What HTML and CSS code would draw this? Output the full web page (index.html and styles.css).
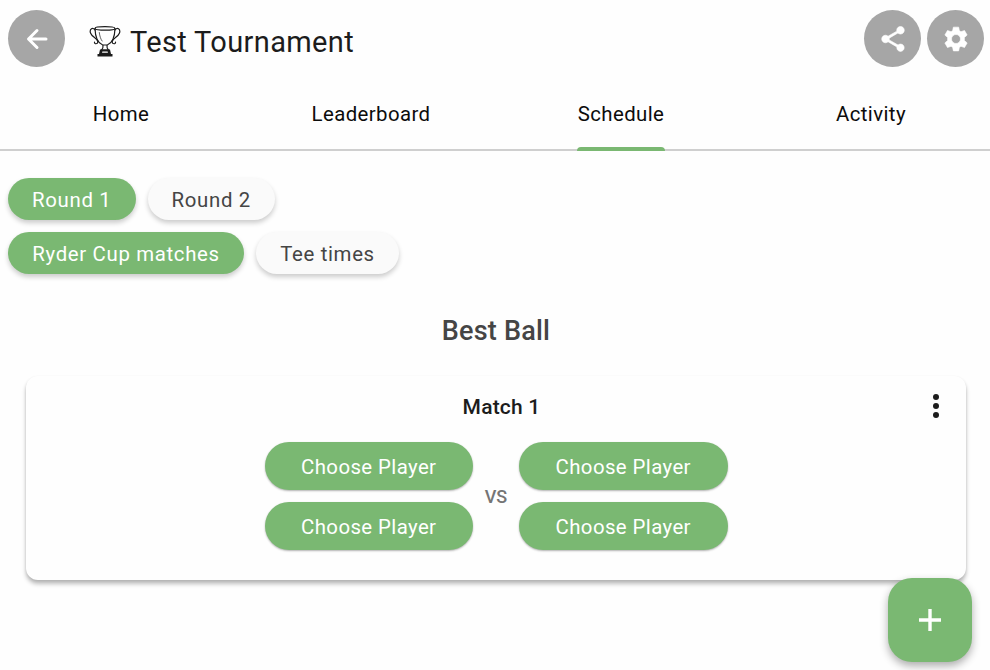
FILE: index.html
```html
<!DOCTYPE html>
<html lang="en">
<head>
<meta charset="utf-8">
<title>Test Tournament</title>
<link rel="stylesheet" href="styles.css">
</head>
<body>
<header class="topbar">
  <button class="round-btn" aria-label="Back">
    <svg width="30" height="30" viewBox="0 0 30 30" fill="none" stroke="#fff" stroke-width="3" stroke-linecap="round" stroke-linejoin="round"><path d="M24 15H7M15 6.500 6.500 15 15 23.500"/></svg>
  </button>
  <svg class="trophy" width="32" height="32" viewBox="0 0 32 32" fill="none" stroke="#1c1c1c" stroke-width="1.2" stroke-linecap="round">
    <ellipse cx="16" cy="3.4" rx="10" ry="1.7"/>
    <path d="M6 3.6c.2 7.500 2.200 14.400 7.700 16.400h4.600C23.800 18 25.800 11.100 26 3.600"/>
    <path d="M6 5C4 1.600.2 4 1.500 8c1.400 4.200 7.700 5.200 7.300 9-.2 2.300-3.500 2.300-3.300.2M26 5c2-3.400 5.800-1 4.500 3-1.400 4.200-7.700 5.200-7.300 9 .2 2.300 3.500 2.300 3.300.2"/>
    <path d="M10.300 7.500c.4 3.500 1.300 6.500 2.800 8.500" stroke-width=".7"/>
    <path d="M14 20.300c.3 2-.2 3.300-1.500 4.700h7c-1.300-1.400-1.800-2.700-1.500-4.700"/>
    <path fill="#1c1c1c" stroke="none" d="M11 24.500h10l1 4.500h1.500v2.500h-15V29H10z"/>
    <path stroke="#fff" stroke-width="1.300" d="M13.700 27.200h4.600"/>
  </svg>
  <h1 class="title">Test Tournament</h1>
  <button class="round-btn share" aria-label="Share">
    <svg width="30" height="30" viewBox="0 0 24 24" fill="#fff" stroke="#fff" stroke-width=".5"><path d="M18 16.080c-.76 0-1.440.3-1.960.77L8.910 12.700c.05-.23.09-.46.09-.7s-.04-.47-.09-.7l7.050-4.110c.54.5 1.250.81 2.040.81 1.660 0 3-1.340 3-3s-1.340-3-3-3-3 1.340-3 3c0 .24.04.47.09.7L8.040 9.810C7.500 9.310 6.790 9 6 9c-1.660 0-3 1.340-3 3s1.340 3 3 3c.79 0 1.500-.31 2.040-.81l7.120 4.160c-.05.21-.08.43-.08.650 0 1.610 1.310 2.920 2.920 2.920s2.920-1.310 2.920-2.920-1.310-2.920-2.920-2.920z"/></svg>
  </button>
  <button class="round-btn" aria-label="Settings">
    <svg width="30" height="30" viewBox="0 0 24 24" fill="#fff" fill-rule="evenodd" stroke="#fff" stroke-width=".5" stroke-linejoin="round"><path d="M9.900 2.500h4.200l.6 2.900 1.300.75 2.800-.95 2.100 3.650-2.200 1.950v2.400l2.200 1.950-2.100 3.650-2.800-.95-1.300.75-.6 2.900H9.900l-.6-2.900-1.300-.75-2.800.95-2.100-3.650 2.200-1.950v-2.400L3.100 8.850 5.200 5.200l2.800.95 1.300-.75zM12 8.400a3.600 3.600 0 1 0 0 7.200 3.600 3.600 0 0 0 0-7.200z"/></svg>
  </button>
</header>
<nav class="tabs">
  <a class="tab">Home</a>
  <a class="tab">Leaderboard</a>
  <a class="tab active">Schedule</a>
  <a class="tab">Activity</a>
</nav>
<main>
  <div class="chips">
    <button class="chip on">Round 1</button>
    <button class="chip">Round 2</button>
  </div>
  <div class="chips">
    <button class="chip on wide">Ryder Cup matches</button>
    <button class="chip tee">Tee times</button>
  </div>
  <h2 class="format">Best Ball</h2>
  <section class="card">
    <h3 class="match">Match 1</h3>
    <button class="more" aria-label="More">
      <svg width="8" height="26" viewBox="0 0 8 26" fill="#1c1c1c"><circle cx="4" cy="4" r="3"/><circle cx="4" cy="13" r="3"/><circle cx="4" cy="22" r="3"/></svg>
    </button>
    <div class="versus">
      <div class="team">
        <button class="player">Choose Player</button>
        <button class="player">Choose Player</button>
      </div>
      <span class="vs">VS</span>
      <div class="team">
        <button class="player">Choose Player</button>
        <button class="player">Choose Player</button>
      </div>
    </div>
  </section>
</main>
<button class="fab" aria-label="Add">
  <svg width="22" height="22" viewBox="0 0 22 22" stroke="#fff" stroke-width="3.4"><path d="M11 0v22M0 11h22"/></svg>
</button>
</body>
</html>
```
FILE: styles.css
```css
* { box-sizing: border-box; }
body {
  margin: 0;
  height: 670px;
  overflow: hidden;
  background: #fefefe;
  color: #1c1c1c;
  font-family: Roboto, sans-serif;
  font-size: 20.4px;
}
button {
  border: 0;
  padding: 0;
  font: inherit;
  color: inherit;
  background: none;
}
h1, h2, h3 { margin: 0; }
svg { display: block; }
.topbar {
  display: flex;
  align-items: center;
  height: 77px;
  padding: 0 6px 0 8px;
}
.round-btn {
  display: flex;
  align-items: center;
  justify-content: center;
  width: 57px;
  height: 57px;
  border-radius: 50%;
  background: #a6a6a6;
}
.trophy { margin: 4px 0 0 23.5px; }
.title {
  margin: 6px 0 0 9.5px;
  font-size: 29px;
  font-weight: 400;
  line-height: 36px;
  letter-spacing: .35px;
}
.share { margin: 0 6px 0 auto; }
.tabs {
  display: grid;
  grid-template-columns: repeat(4, 250px);
  justify-items: center;
  height: 74px;
  margin-left: -4px;
  border-bottom: 2px solid #cfcfcf;
  color: #0c0c0c;
}
.tab {
  height: 74px;
  padding-top: 24px;
  line-height: 26px;
  letter-spacing: .4px;
}
.active { position: relative; }
.active::after {
  content: "";
  position: absolute;
  left: -.5px;
  right: -.5px;
  bottom: 0;
  height: 4.500px;
  border-radius: 4px 4px 0 0;
  background: #7ab872;
}
main { padding: 27px 24px 0 26px; }
.chips {
  display: flex;
  gap: 12px;
  margin: 0 0 12px -18px;
}
.chip {
  width: 127.5px;
  height: 42px;
  padding-top: 1px;
  border-radius: 21px;
  background: #fafafa;
  color: #454545;
  letter-spacing: .65px;
  line-height: 42px;
  white-space: nowrap;
  box-shadow: 0 3px 5px rgba(0, 0, 0, .2);
}
.on { background: #7ab872; color: #fff; }
.wide { width: 236px; }
.tee { width: 143px; }
.format {
  margin-top: 39px;
  text-align: center;
  font-size: 27px;
  font-weight: 500;
  line-height: 36px;
  letter-spacing: .2px;
  color: #454545;
}
.card {
  position: relative;
  height: 204px;
  margin-top: 27px;
  padding-top: 18px;
  border-radius: 12px;
  background: #fefefe;
  box-shadow: 0 4px 4px rgba(0, 0, 0, .26), 0 1px 3px rgba(0, 0, 0, .08);
}
.match {
  padding-left: 11px;
  text-align: center;
  font-size: 21px;
  font-weight: 500;
  line-height: 26px;
  letter-spacing: .2px;
}
.more {
  position: absolute;
  top: 17px;
  right: 26px;
}
.versus {
  display: flex;
  align-items: center;
  justify-content: center;
  margin-top: 22px;
}
.team { display: grid; gap: 12px; }
.player {
  width: 208.5px;
  height: 48px;
  padding-top: 1px;
  border-radius: 24px;
  background: #7ab872;
  color: #fff;
  letter-spacing: .4px;
  box-shadow: 0 1px 2px rgba(0, 0, 0, .3);
}
.vs {
  width: 46px;
  text-align: center;
  font-size: 18px;
  font-weight: 500;
  color: #757575;
}
.fab {
  position: fixed;
  right: 18px;
  bottom: 8px;
  display: flex;
  align-items: center;
  justify-content: center;
  width: 84px;
  height: 84px;
  border-radius: 24px;
  background: #7ab872;
  box-shadow: 0 4px 8px rgba(0, 0, 0, .32);
}
```
